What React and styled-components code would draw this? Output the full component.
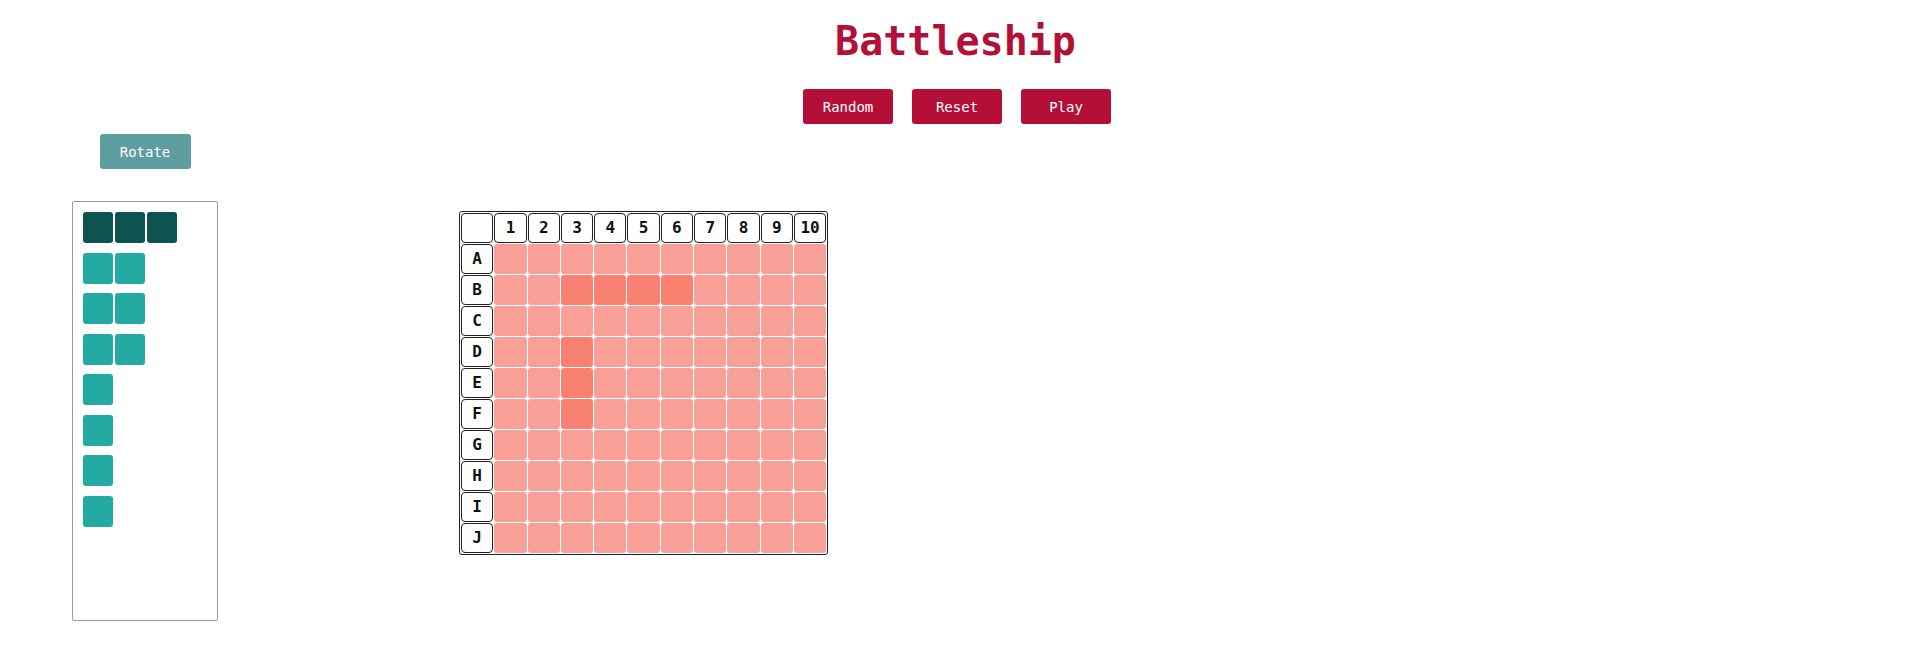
// Battleship setup screen: title, controls, ship dock and the player's board

import styled, { createGlobalStyle } from "styled-components";

const GlobalStyle = createGlobalStyle`
  body {
    margin: 0;
    background: #ffffff;
    font-family: "DejaVu Sans Mono", "Liberation Mono", monospace;
  }
`;

const ROWS = ["A", "B", "C", "D", "E", "F", "G", "H", "I", "J"];
const COLS = [1, 2, 3, 4, 5, 6, 7, 8, 9, 10];

// cells already occupied by placed ships
const PLACED = new Set(["B3", "B4", "B5", "B6", "D3", "E3", "F3"]);

// ships still waiting in the dock (first one is selected)
const DOCK = [
    { size: 3, selected: true },
    { size: 2 },
    { size: 2 },
    { size: 2 },
    { size: 1 },
    { size: 1 },
    { size: 1 },
    { size: 1 },
];

const App = () => {
    return (
        <Page>
            <GlobalStyle />
            <Header>
                <Title>Battleship</Title>
                <Controls>
                    <ActionButton>Random</ActionButton>
                    <ActionButton>Reset</ActionButton>
                    <ActionButton>Play</ActionButton>
                </Controls>
            </Header>

            <Main>
                <DockColumn>
                    <RotateButton>Rotate</RotateButton>
                    <Dock>
                        {DOCK.map((ship, i) => (
                            <Ship key={i}>
                                {Array.from({ length: ship.size }).map((_, j) => (
                                    <ShipPart key={j} $selected={ship.selected} />
                                ))}
                            </Ship>
                        ))}
                    </Dock>
                </DockColumn>

                <Board>
                    <Label />
                    {COLS.map((c) => (
                        <Label key={c}>{c}</Label>
                    ))}
                    {ROWS.map((r) => (
                        <BoardRow key={r} row={r} />
                    ))}
                </Board>
            </Main>
        </Page>
    );
};

const BoardRow = ({ row }) => (
    <>
        <Label>{row}</Label>
        {COLS.map((c) => (
            <Cell key={c} $ship={PLACED.has(`${row}${c}`)} />
        ))}
    </>
);

export default App;

const Page = styled.div`
    width: 100%;
    min-height: 668px;
`;

const Header = styled.header`
    display: flex;
    flex-direction: column;
    align-items: center;
    padding-top: 18px;
`;

const Title = styled.h1`
    margin: 0;
    font-size: 40px;
    line-height: 1.164;
    font-weight: bold;
    color: #b40f37;
`;

const Controls = styled.div`
    display: flex;
    gap: 19.5px;
    margin-top: 24.5px;
    margin-left: 3px;
`;

const ActionButton = styled.button`
    width: 89.5px;
    height: 35px;
    border: none;
    border-radius: 3px;
    background: #b40f37;
    color: #ffffff;
    font-family: inherit;
    font-size: 14px;
    cursor: pointer;
`;

const Main = styled.main`
    display: flex;
    align-items: flex-start;
    padding-left: 72px;
    margin-top: 10px;
`;

const DockColumn = styled.div`
    display: flex;
    flex-direction: column;
    align-items: center;
    width: 146px;
`;

const RotateButton = styled(ActionButton)`
    width: 91px;
    background: #5f9ea0;
`;

const Dock = styled.div`
    box-sizing: border-box;
    width: 146px;
    height: 420px;
    margin-top: 32px;
    padding: 10px 0 0 10px;
    border: 1px solid #9a9a9a;
    border-radius: 2px;
    display: flex;
    flex-direction: column;
    gap: 9.5px;
`;

const Ship = styled.div`
    display: flex;
    gap: 2px;
`;

const ShipPart = styled.div`
    width: 30px;
    height: 31px;
    border-radius: 3px;
    background: ${(p) => (p.$selected ? "#0f5350" : "#23aaa2")};
`;

const Board = styled.div`
    display: grid;
    grid-template-columns: repeat(11, 32.3px);
    grid-auto-rows: 30px;
    gap: 1px;
    padding: 1px;
    margin-left: 241px;
    margin-top: 76.5px;
    border: 1px solid #222222;
    border-radius: 3px;
`;

const Label = styled.div`
    box-sizing: border-box;
    display: flex;
    align-items: center;
    justify-content: center;
    background: #ffffff;
    border: 1px solid #222222;
    border-radius: 4px;
    font-size: 16px;
    font-weight: bold;
    color: #111111;
`;

const Cell = styled.div`
    border-radius: 3px;
    background: ${(p) => (p.$ship ? "#fa8072" : "#f8a097")};
`;
